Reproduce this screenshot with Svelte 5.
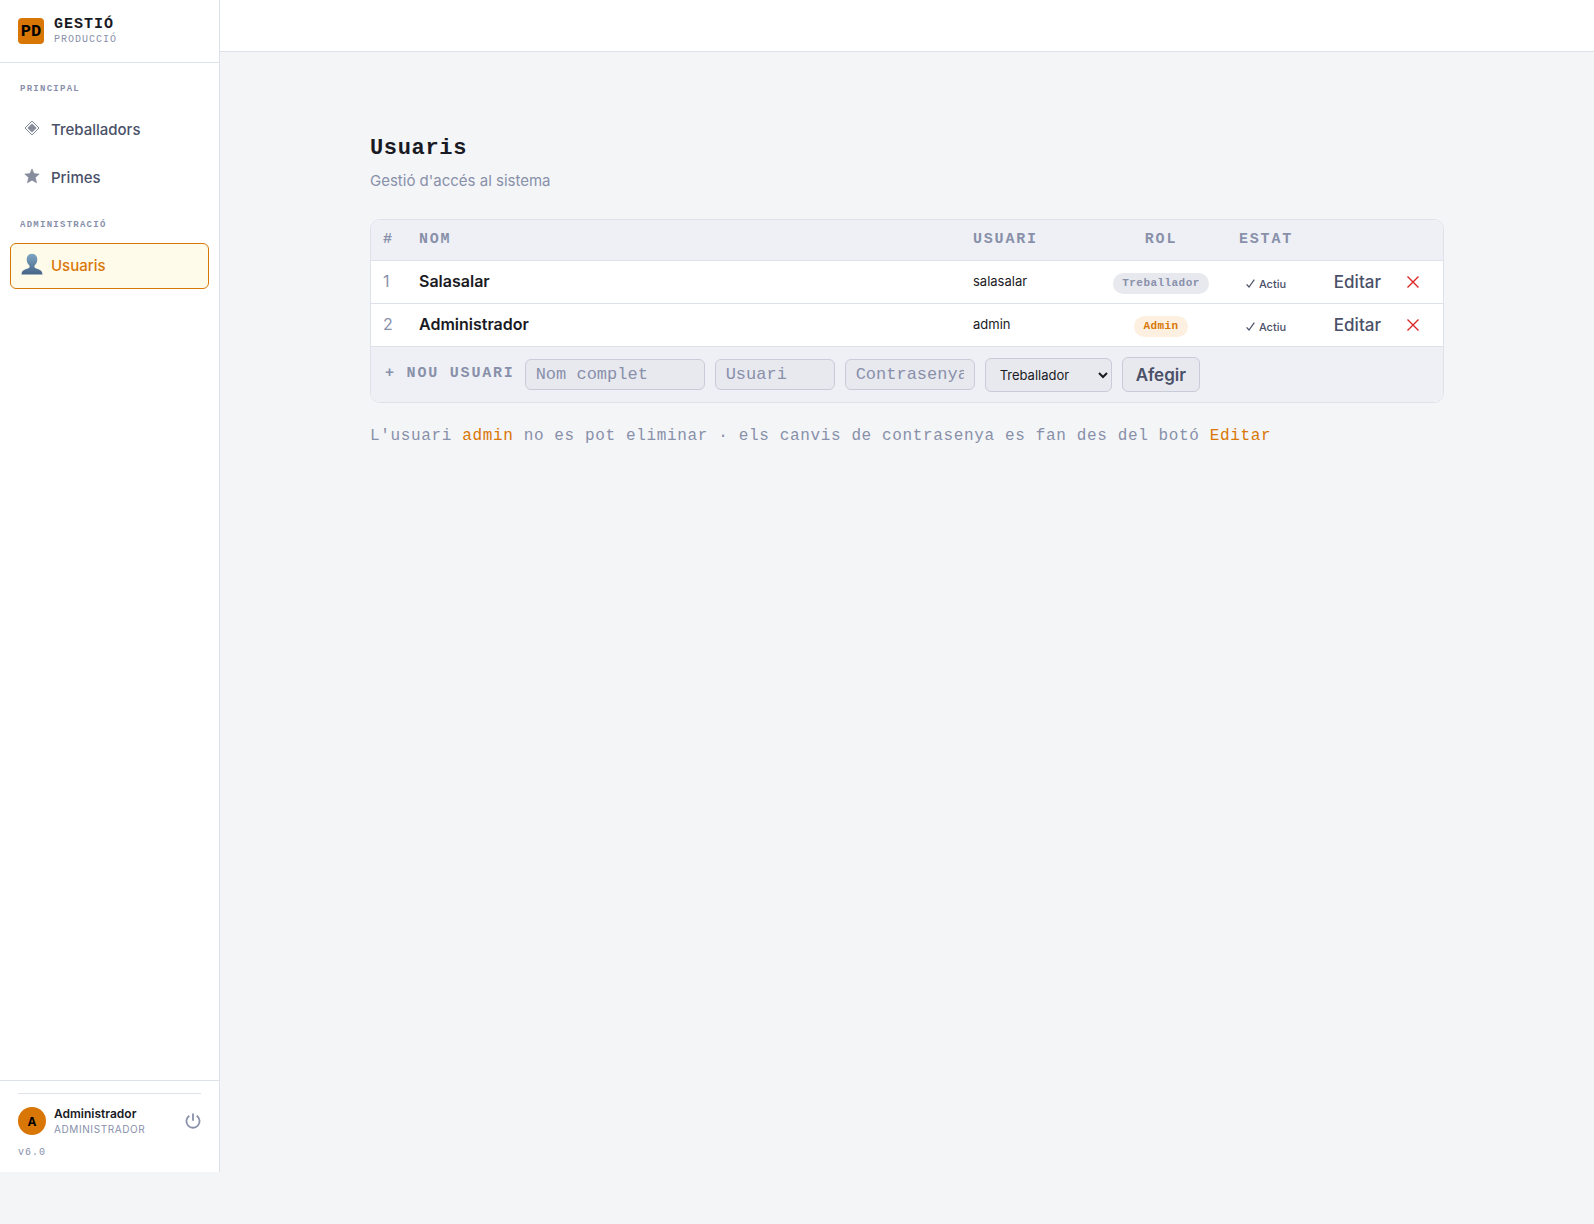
<script lang="ts">
	type Role = 'worker' | 'admin';
	type User = {
		id: number;
		name: string;
		username: string;
		role: Role;
		active: boolean;
	};

	const roleLabels: Record<Role, string> = {
		worker: 'Treballador',
		admin: 'Admin'
	};

	const sections = [
		{
			title: 'Principal',
			items: [
				{ label: 'Treballadors', icon: 'diamond', active: false },
				{ label: 'Primes', icon: 'star', active: false }
			]
		},
		{
			title: 'Administració',
			items: [{ label: 'Usuaris', icon: 'user', active: true }]
		}
	];

	let users = $state<User[]>([
		{ id: 1, name: 'Salasalar', username: 'salasalar', role: 'worker', active: true },
		{ id: 2, name: 'Administrador', username: 'admin', role: 'admin', active: true }
	]);

	let name = $state('');
	let username = $state('');
	let password = $state('');
	let role = $state<Role>('worker');

	const addUser = (event: SubmitEvent) => {
		event.preventDefault();
		if (!name || !username || !password) return;

		const id = Math.max(0, ...users.map((user) => user.id)) + 1;
		users.push({ id, name, username, role, active: true });

		name = '';
		username = '';
		password = '';
	};

	const removeUser = (user: User) => {
		if (user.username === 'admin') return;
		users = users.filter((item) => item.id !== user.id);
	};
</script>

<div class="app">
	<aside class="sidebar">
		<div class="brand">
			<div class="logo">PD</div>
			<div>
				<div class="brand-name">GESTIÓ</div>
				<div class="brand-sub">PRODUCCIÓ</div>
			</div>
		</div>

		<nav>
			{#each sections as section}
				<div class="section">
					<div class="section-title">{section.title}</div>
					{#each section.items as item}
						<a href="#{item.label.toLowerCase()}" class="nav-item" class:active={item.active}>
							<span class="nav-icon">
								{#if item.icon === 'diamond'}
									<svg width="16" height="16" viewBox="0 0 16 16">
										<path d="M8 1 15 8 8 15 1 8Z" fill="none" stroke="#868c9c" stroke-width="1" />
										<path d="M8 3.400 12.600 8 8 12.600 3.400 8Z" fill="#868c9c" />
									</svg>
								{:else if item.icon === 'star'}
									<svg width="16" height="16" viewBox="0 0 16 16">
										<path
											d="M8 .8 10.100 5.600 15.300 6.100 11.400 9.600 12.600 14.900 8 12.200 3.400 14.900 4.600 9.600 .7 6.100 5.900 5.600Z"
											fill="#868c9c"
											stroke="#868c9c"
											stroke-width="0.5"
										/>
									</svg>
								{:else}
									<svg width="22" height="22" viewBox="0 0 22 22">
										<defs>
											<linearGradient id="bust" x1="0" y1="0" x2="0" y2="1">
												<stop offset="0" stop-color="#7fa6c4" />
												<stop offset="1" stop-color="#466588" />
											</linearGradient>
										</defs>
										<path
											d="M11 .8C7.600.8 5.700 3.200 5.700 6.500c0 2.400 1.100 4.700 2.700 6 .5 1.500.1 2.400-1.400 3-3.400 1-6.200 1.700-6.500 5.900h21c-.3-4.200-3.100-4.900-6.500-5.900-1.500-.6-1.900-1.500-1.400-3 1.600-1.300 2.700-3.600 2.700-6C16.300 3.200 14.400.8 11 .8Z"
											fill="url(#bust)"
										/>
									</svg>
								{/if}
							</span>
							{item.label}
						</a>
					{/each}
				</div>
			{/each}
		</nav>

		<div class="sidebar-footer">
			<div class="account">
				<div class="avatar">A</div>
				<div class="account-info">
					<div class="account-name">Administrador</div>
					<div class="account-role">ADMINISTRADOR</div>
				</div>
				<button class="logout" aria-label="Tancar sessió">
					<svg width="16" height="16" viewBox="0 0 16 16" fill="none" stroke="currentColor" stroke-width="1.8">
						<path d="M4.300 2.700A6.600 6.600 0 1 0 11.700 2.700" />
						<path d="M8 .5v7.300" />
					</svg>
				</button>
			</div>
			<div class="version">v6.0</div>
		</div>
	</aside>

	<div class="content">
		<header class="topbar"></header>

		<main>
			<h1>Usuaris</h1>
			<p class="subtitle">Gestió d'accés al sistema</p>

			<div class="card">
				<table>
					<thead>
						<tr>
							<th class="col-id">#</th>
							<th>Nom</th>
							<th class="col-user">Usuari</th>
							<th class="col-role">Rol</th>
							<th class="col-state">Estat</th>
							<th class="col-actions"></th>
						</tr>
					</thead>
					<tbody>
						{#each users as user (user.id)}
							<tr>
								<td class="id">{user.id}</td>
								<td class="name">{user.name}</td>
								<td class="username">{user.username}</td>
								<td>
									<div class="center"><span class="badge {user.role}">{roleLabels[user.role]}</span></div>
								</td>
								<td>
									<div class="center">
										<button class="state">
											{#if user.active}
												<svg width="9" height="9" viewBox="0 0 9 9" fill="none" stroke="currentColor" stroke-width="1.2">
													<path d="M.6 5.300 3 8 8.300.6" />
												</svg>
											{/if}
											{user.active ? 'Actiu' : 'Inactiu'}
										</button>
									</div>
								</td>
								<td>
									<div class="actions">
										<button class="edit">Editar</button>
										<button class="remove" aria-label="Eliminar" onclick={() => removeUser(user)}>
											<svg width="12" height="12" viewBox="0 0 12 12" fill="none" stroke="currentColor" stroke-width="1.4">
												<path d="M.5.5 11.500 11.500M11.500.5.5 11.500" />
											</svg>
										</button>
									</div>
								</td>
							</tr>
						{/each}
					</tbody>
				</table>

				<form class="new-user" onsubmit={addUser}>
					<span class="form-title">+ Nou usuari</span>
					<input class="field-name" type="text" placeholder="Nom complet" aria-label="Nom complet" bind:value={name} />
					<input class="field-user" type="text" placeholder="Usuari" aria-label="Usuari" bind:value={username} />
					<input class="field-pass" type="password" placeholder="Contrasenya" aria-label="Contrasenya" bind:value={password} />
					<select aria-label="Rol" bind:value={role}>
						<option value="worker">Treballador</option>
						<option value="admin">Admin</option>
					</select>
					<button class="add" type="submit">Afegir</button>
				</form>
			</div>

			<p class="note">
				L'usuari <span>admin</span> no es pot eliminar · els canvis de contrasenya es fan des del botó <span>Editar</span>
			</p>
		</main>
	</div>
</div>

<style>
	:global(*, *::before, *::after) {
		box-sizing: border-box;
	}

	:global(body) {
		margin: 0;
		background: #f4f5f7;
	}

	.app {
		--mono: 'Courier New', 'Liberation Mono', monospace;
		--text: #1a1a24;
		--text-2: #4a5068;
		--muted: #8890aa;
		--border: #dde1ea;
		--border-2: #c8cbd8;
		--surface: #eff0f5;
		--surface-2: #e8e9ef;
		--accent: #d97706;

		display: flex;
		align-items: flex-start;
		min-height: 100vh;
		font-family: Inter, sans-serif;
		font-size: 16px;
		color: var(--text);
	}

	button {
		background: none;
		border: none;
		padding: 0;
		font-family: inherit;
		cursor: pointer;
	}

	svg {
		display: block;
		flex-shrink: 0;
	}

	.sidebar {
		display: flex;
		flex-direction: column;
		flex-shrink: 0;
		width: 220px;
		height: calc(100vh - 52px);
		background: #fff;
		border-right: 1px solid var(--border);
	}

	.brand {
		display: flex;
		align-items: center;
		gap: 10px;
		height: 63px;
		padding: 0 18px;
		border-bottom: 1px solid var(--border);
	}

	.logo {
		display: grid;
		place-items: center;
		width: 26px;
		height: 26px;
		border-radius: 4px;
		background: var(--accent);
		color: #000;
		font-family: var(--mono);
		font-size: 17px;
		font-weight: 700;
	}

	.brand-name {
		font-family: var(--mono);
		font-size: 15px;
		font-weight: 700;
		line-height: 17px;
		letter-spacing: 1px;
	}

	.brand-sub {
		font-family: var(--mono);
		font-size: 10px;
		line-height: 13px;
		letter-spacing: 1px;
		color: var(--muted);
	}

	nav {
		display: flex;
		flex-direction: column;
		flex: 1;
		gap: 6px;
		padding: 8px 10px;
	}

	.section {
		display: flex;
		flex-direction: column;
		gap: 2px;
	}

	.section-title {
		padding: 12px 10px 10px;
		font-family: var(--mono);
		font-size: 9px;
		font-weight: 700;
		line-height: 12px;
		letter-spacing: 0.14em;
		text-transform: uppercase;
		color: var(--muted);
	}

	.nav-item {
		display: flex;
		align-items: center;
		gap: 10px;
		height: 46px;
		padding: 0 12px 2px;
		border: 1px solid transparent;
		border-radius: 6px;
		font-size: 15px;
		font-weight: 500;
		color: var(--text-2);
		text-decoration: none;
	}

	.nav-item.active {
		background: #fffbeb;
		border-color: var(--accent);
		color: var(--accent);
	}

	.nav-icon {
		display: flex;
		justify-content: center;
		width: 18px;
		padding-bottom: 2px;
	}

	.sidebar-footer {
		padding: 12px 18px;
		border-top: 1px solid var(--border);
	}

	.account {
		display: flex;
		align-items: center;
		gap: 8px;
		padding-top: 11px;
		border-top: 1px solid var(--border);
	}

	.avatar {
		display: grid;
		place-items: center;
		width: 28px;
		height: 28px;
		border-radius: 50%;
		background: var(--accent);
		color: #000;
		font-size: 12px;
		font-weight: 700;
	}

	.account-info {
		flex: 1;
	}

	.account-name {
		font-size: 12px;
		font-weight: 600;
		line-height: 17px;
	}

	.account-role {
		font-size: 10px;
		line-height: 15px;
		letter-spacing: 0.06em;
		color: var(--muted);
	}

	.logout {
		color: var(--muted);
	}

	.version {
		padding-top: 8px;
		font-family: var(--mono);
		font-size: 10px;
		line-height: 15px;
		letter-spacing: 1px;
		color: var(--muted);
	}

	.content {
		flex: 1;
		min-width: 0;
	}

	.topbar {
		height: 52px;
		background: #fff;
		border-bottom: 1px solid var(--border);
	}

	main {
		max-width: 1130px;
		margin: 0 auto;
		padding: 82px 28px;
	}

	h1 {
		margin: 0;
		font-family: var(--mono);
		font-size: 22px;
		line-height: 30px;
		letter-spacing: 0.03em;
	}

	.subtitle {
		margin: 6px 0 28px;
		font-size: 15px;
		line-height: 21px;
		color: var(--muted);
	}

	.card {
		overflow: hidden;
		background: #fff;
		border: 1px solid var(--border);
		border-radius: 10px;
	}

	table {
		width: 100%;
		border-collapse: separate;
		border-spacing: 0;
		table-layout: fixed;
	}

	th {
		height: 41px;
		padding: 0 12px 2px;
		background: var(--surface);
		border-bottom: 1px solid var(--border);
		font-family: var(--mono);
		font-size: 15px;
		font-weight: 700;
		letter-spacing: 0.12em;
		text-align: left;
		text-transform: uppercase;
		color: var(--muted);
	}

	td {
		height: 43px;
		padding: 0 12px;
		border-bottom: 1px solid var(--border);
	}

	.col-id {
		width: 36px;
	}

	.col-user {
		width: 140px;
	}

	.col-role {
		width: 120px;
		text-align: center;
	}

	.col-state {
		width: 90px;
		text-align: center;
	}

	.col-actions {
		width: 132px;
	}

	.id,
	.name,
	.username {
		padding-bottom: 2px;
	}

	.id {
		font-size: 16px;
		color: var(--muted);
	}

	.name {
		font-size: 16px;
		font-weight: 600;
	}

	.username {
		font-size: 13px;
	}

	.center {
		display: flex;
		justify-content: center;
		padding-top: 3px;
	}

	.badge {
		padding: 0 9px;
		border-radius: 11px;
		font-family: var(--mono);
		font-size: 11px;
		font-weight: 700;
		line-height: 21px;
		letter-spacing: 0.04em;
	}

	.badge.worker {
		background: var(--surface-2);
		color: var(--muted);
	}

	.badge.admin {
		background: #fdf0e0;
		color: var(--accent);
	}

	.state {
		display: flex;
		align-items: center;
		gap: 4px;
		font-size: 11px;
		font-weight: 500;
		color: var(--text-2);
	}

	.actions {
		display: flex;
		align-items: center;
		justify-content: flex-end;
		gap: 26px;
		padding-right: 12px;
	}

	.edit {
		font-size: 17px;
		font-weight: 500;
		color: var(--text-2);
	}

	.remove {
		color: #dc2626;
	}

	.new-user {
		display: flex;
		align-items: center;
		gap: 10px;
		padding: 10px 14px;
		background: var(--surface);
	}

	.form-title {
		padding-bottom: 2px;
		font-family: var(--mono);
		font-size: 15px;
		font-weight: 700;
		letter-spacing: 0.12em;
		text-transform: uppercase;
		white-space: nowrap;
		color: var(--muted);
	}

	input,
	select,
	.add {
		background: var(--surface-2);
		border: 1px solid var(--border-2);
		border-radius: 6px;
		outline: none;
	}

	input {
		height: 31px;
		padding: 0 10px;
		font-family: var(--mono);
		font-size: 17px;
		color: var(--text);
	}

	input::placeholder {
		color: var(--muted);
	}

	.field-name {
		width: 180px;
	}

	.field-user {
		width: 120px;
	}

	.field-pass {
		width: 130px;
	}

	select {
		width: 127px;
		height: 34px;
		padding: 0 0 0 10px;
		font-family: inherit;
		font-size: 13px;
		color: var(--text);
	}

	.add {
		height: 35px;
		padding: 0 13px;
		font-size: 17px;
		font-weight: 600;
		color: var(--text-2);
	}

	.note {
		margin: 23px 0 0;
		font-family: var(--mono);
		font-size: 16px;
		line-height: 20px;
		letter-spacing: 0.04em;
		color: var(--muted);
	}

	.note span {
		color: var(--accent);
	}
</style>
